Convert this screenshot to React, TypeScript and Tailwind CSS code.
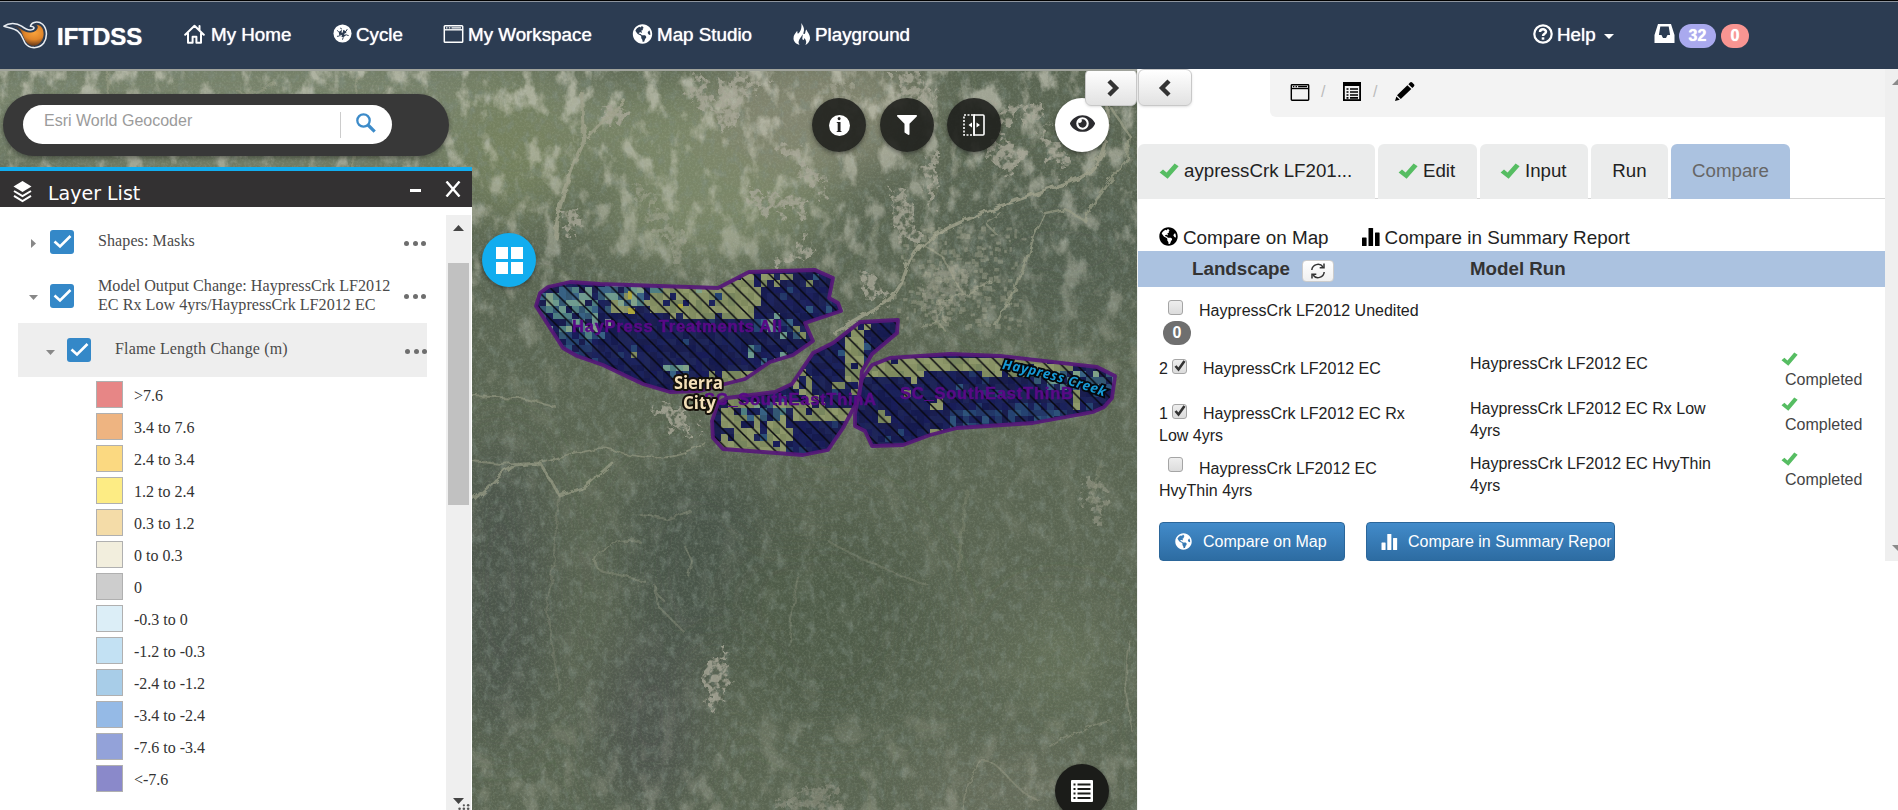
import React from "react";
import { FaGlobeAmericas, FaFilter, FaEye } from "react-icons/fa";

type P = { className?: string };

const Home = ({ className }: P) => (
  <svg viewBox="0 0 21 20" className={className} fill="none" stroke="currentColor" strokeWidth="2" strokeLinejoin="round" strokeLinecap="round">
    <path d="M1.2 10.8 10.5 1.8l9.3 9M4 9.5v9.2h4.6v-6h3.8v6H17V9.5M15.5 6V2" />
  </svg>
);
const Cycle = ({ className }: P) => (
  <svg viewBox="0 0 20 20" className={className}>
    <circle cx="10" cy="10" r="9.5" fill="white" />
    <path d="M10 5.800 13.800 7.600 14.200 11.600 10.800 14 6.800 12.600 6 8.400z" fill="#2c3c52" />
    <path d="M10 5.800 7.500 4.200M13.800 7.600 15 5.400M14.200 11.600 16.500 12.200M10.800 14 10 16.500M6.800 12.600 4.200 13M6 8.400 4.500 6.600" stroke="#2c3c52" strokeWidth="1" />
    <path d="M10.500 4.500 9.500 9M14.500 9.500 12 11M8 13.500 8.800 11.500" stroke="white" strokeWidth="1.300" />
  </svg>
);
const WindowIcon = ({ className }: P) => (
  <svg viewBox="0 0 20 18" className={className} fill="none" stroke="currentColor">
    <rect x=".8" y=".8" width="18.4" height="16.4" rx=".8" strokeWidth="1.5" />
    <path d="M1 4.8h18" strokeWidth="1.4" />
    <path d="M2.5 2.8h1.5M5.3 2.8h1.5M8 2.8h9.5" strokeWidth="1.2" />
  </svg>
);
const Fire = ({ className }: P) => (
  <svg viewBox="0 0 18 22" className={className} fill="currentColor">
    <path d="M8.2 0c1.6 2.4 3 4.6 2.8 7.2-.1 1.4-.8 2.6-.5 3.8.9.3 1.6-.6 1.8-1.6.2-1 .1-2 1.2-2.9.3 2.2 3.9 5 3.5 9.2-.3 3-2.3 5.2-4.6 6.2 1.6-2.6.8-5.2-1.2-7 .1 1.9-1 2.5-1.6 1.6-.9-1.4.6-3.4-.2-5.3-.4 2.4-3.6 4.6-3.8 7.5-.1 1.2.3 2.4 1 3.2C3.400 21 .6 18.700.5 15.400.4 12 2.600 10.200 4.200 7.800c.3 1 0 2.200.7 2.900 2.700-1.600 4.300-6.200 3.300-10.700z" />
  </svg>
);
const Help = ({ className }: P) => (
  <svg viewBox="0 0 20 20" className={className} fill="none" stroke="currentColor">
    <circle cx="10" cy="10" r="8.7" strokeWidth="2.200" />
    <path d="M7 8c0-3.600 6-3.600 6-.2 0 2-3 2-3 4.200" strokeWidth="2.500" />
    <path d="M10 13.300v2.400" strokeWidth="2.600" />
  </svg>
);
const Inbox = ({ className }: P) => (
  <svg viewBox="0 0 20 19" className={className}>
    <path fillRule="evenodd" fill="currentColor" d="M3.500 0h13L20 11v8H0v-8zM5.800 2.600 4.400 11h2.600l1.500 3h3l1.500-3h2.600L14.200 2.600z" />
  </svg>
);
const ListIcon = ({ className }: P) => (
  <svg viewBox="0 0 18 19" className={className} fill="none" stroke="currentColor">
    <rect x=".9" y=".9" width="16.200" height="17.200" strokeWidth="1.800" />
    <path d="M0 2h18" strokeWidth="4" />
    <path d="M3.500 7h2M3.500 10h2M3.500 13h2M3.500 15.800h2M7 7h8M7 10h8M7 13h8M7 15.800h8" strokeWidth="1.700" />
  </svg>
);
const Pencil = ({ className }: P) => (
  <svg viewBox="0 0 20 19" className={className} fill="currentColor">
    <path d="M15 .6c.7-.7 1.500-.7 2.200 0l1.700 1.600c.7.7.7 1.500 0 2.200l-1.600 1.500-3.900-3.700zM12.400 3.200l3.900 3.700L5.800 17 2 13.200zM1.400 14.400 4.800 17.700 0 19z" />
  </svg>
);
const Bars = ({ className }: P) => (
  <svg viewBox="0 0 18 18" className={className} fill="currentColor">
    <rect x="0" y="9.500" width="4.600" height="8.500" rx=".6" />
    <rect x="6.500" y="0" width="4.600" height="18" rx=".6" />
    <rect x="13" y="4.500" width="4.600" height="13.500" rx=".6" />
  </svg>
);
const Refresh = ({ className }: P) => (
  <svg viewBox="0 0 16 16" className={className} fill="none" stroke="currentColor" strokeWidth="1.500">
    <path d="M1.800 7A6.200 6.200 0 0 1 13 4M14.200 9A6.200 6.200 0 0 1 3 12" />
    <path d="M14 .5v4.300H9.700M2 15.500v-4.300h4.300" />
  </svg>
);
const Logo = ({ className }: P) => (
  <svg viewBox="0 0 46 30" className={className}>
    <defs>
      <radialGradient id="flame" cx=".68" cy=".38" r=".6">
        <stop offset="0" stopColor="#f9a33c" />
        <stop offset=".55" stopColor="#e0852a" />
        <stop offset="1" stopColor="#6d3d1c" />
      </radialGradient>
    </defs>
    <path d="M1 6C6 2.200 14 2.500 19 6c4 3 8 5 11.500 3.200 2-1.200 1.500-3-2.500-3.200C29 1.500 36 .2 40.500 4c5 5 5 14 1 19.500-5 6-15 6-19-.5-3-5.500-3.500-9-7.500-12C11.500 8.300 7 8 1 6z" fill="#2c3c52" stroke="#e9edf2" strokeWidth="1.600" strokeLinejoin="round" />
    <path d="M11.500 5.500c4 .5 7 4 11 6 5 2.200 12 .5 13-4 .2-1.500-.5-2.500-1.500-3 5 0 7.500 4 7.500 9.500 0 6-4.500 12-10 12s-8.500-4-10.500-9c-2-5.500-4-9.500-9.500-11.500z" fill="url(#flame)" />
  </svg>
);

const palette = {
  navy: ["#11155a", "#141a5c", "#0e1250", "#171d58", "#12164f"],
  olive: ["#8c9666", "#848f60", "#949d6c", "#7a885e"],
  teal: ["#4b7f86", "#6f9f93", "#2e5577", "#84a88e", "#34618a"],
  blue: ["#1f3f74", "#27507e", "#1b3269"],
};
type Blob = [number, number, number, number, keyof typeof palette, number];
const rnd = (a: number, b: number) => {
  const s = Math.sin(a * 127.1 + b * 311.700) * 43758.5453;
  return s - Math.floor(s);
};

function Raster({ x0, y0, x1, y1, blobs, seed, id }: { x0: number; y0: number; x1: number; y1: number; blobs: Blob[]; seed: number; id: string }) {
  const c = 6.5;
  const cells: React.ReactNode[] = [];
  for (let y = y0, j = 0; y < y1; y += c, j++) {
    for (let x = x0, i = 0; x < x1; x += c, i++) {
      let kind: keyof typeof palette = rnd(i + seed, j * 3) > 0.955 ? "blue" : "navy";
      if (rnd(i * 2 + seed, j + 9) > 0.99) kind = "olive";
      blobs.forEach(([cx, cy, rx, ry, k, d], n) => {
        const q = ((x - cx) / rx) ** 2 + ((y - cy) / ry) ** 2;
        if (q < 0.75 + rnd(i, j + n * 17) * 0.5 && rnd(i + n * 31 + seed, j + 5) < d) kind = k;
      });
      const set = palette[kind];
      cells.push(<rect key={i + "_" + j} x={x} y={y} width={c + 0.2} height={c + 0.2} fill={set[Math.floor(rnd(i + 4, j + seed) * set.length)]} />);
    }
  }
  return <g clipPath={`url(#${id})`} shapeRendering="crispEdges">{cells}</g>;
}

const areaAll = "M536 305 540 292 548 286 570 281 600 283 718 287 749 271 815 269 833 277 829 297 838 302 841 310 805 322 813 340 793 354 770 361 745 378 725 383 700 390 670 391 643 383 603 364 577 355 563 347Z";
const areaA = "M712 420 718 402 727 397 775 391 792 383 813 352 833 342 860 321 898 319 897 332 872 353 862 370 859 397 843 427 828 449 803 454 723 448 713 437Z";
const areaB = "M855 413 862 378 872 364 890 357 950 353 1000 355 1097 366 1115 375 1112 397 1104 406 1093 411 1033 422 957 427 930 434 903 444 872 445 865 430 855 425Z";

const blobsAll: Blob[] = [
  [560, 305, 26, 24, "teal", 0.7],
  [640, 285, 50, 16, "teal", 0.75],
  [700, 297, 55, 17, "olive", 0.9],
  [738, 290, 20, 26, "olive", 0.95],
  [590, 312, 16, 26, "teal", 0.6],
  [620, 298, 14, 12, "olive", 0.6],
  [570, 340, 26, 14, "blue", 0.7],
  [780, 275, 36, 6, "olive", 0.6],
  [785, 322, 40, 12, "teal", 0.35],
  [775, 350, 40, 8, "teal", 0.3],
  [745, 376, 45, 9, "olive", 0.8],
  [798, 328, 8, 8, "olive", 0.7],
  [672, 366, 12, 5, "teal", 0.7],
];
const blobsA: Blob[] = [
  [735, 420, 22, 30, "olive", 0.7],
  [745, 442, 40, 8, "olive", 0.85],
  [775, 428, 14, 18, "olive", 0.85],
  [825, 411, 40, 7, "olive", 0.85],
  [853, 352, 11, 36, "olive", 0.97],
  [800, 400, 40, 6, "olive", 0.7],
  [762, 406, 24, 12, "teal", 0.5],
  [836, 381, 6, 4, "olive", 1],
  [880, 325, 30, 5, "olive", 0.35],
  [802, 380, 10, 14, "olive", 0.5],
];
const blobsB: Blob[] = [
  [890, 360, 42, 12, "olive", 0.95],
  [960, 359, 60, 8, "olive", 0.97],
  [1020, 363, 50, 10, "olive", 0.75],
  [1060, 376, 40, 12, "teal", 0.45],
  [1093, 372, 26, 9, "teal", 0.7],
  [1072, 396, 5, 14, "olive", 0.9],
  [1010, 416, 70, 14, "blue", 0.75],
  [934, 402, 5, 12, "olive", 0.8],
  [880, 412, 5, 6, "olive", 0.9],
  [933, 426, 4, 4, "olive", 1],
];

function MapCanvas() {
  return (
    <svg viewBox="0 70 1137 740" className="block h-full w-full" preserveAspectRatio="xMinYMin slice">
      <defs>
        <filter id="blur"><feGaussianBlur stdDeviation="26" /></filter>
        <filter id="rough" x="-10%" y="-10%" width="120%" height="120%">
          <feTurbulence type="fractalNoise" baseFrequency=".09" numOctaves="3" seed="5" result="n" />
          <feDisplacementMap in="SourceGraphic" in2="n" scale="7" result="d" />
          <feGaussianBlur in="d" stdDeviation=".5" />
        </filter>
        <filter id="patchy" x="-10%" y="-10%" width="120%" height="120%">
          <feTurbulence type="fractalNoise" baseFrequency=".07" numOctaves="4" seed="15" result="n" />
          <feDisplacementMap in="SourceGraphic" in2="n" scale="34" xChannelSelector="R" yChannelSelector="G" result="d" />
          <feTurbulence type="fractalNoise" baseFrequency=".16" numOctaves="3" seed="2" />
          <feColorMatrix values="0 0 0 0 1  0 0 0 0 1  0 0 0 0 1  5 0 0 0 -1.800" result="m" />
          <feComposite in="d" in2="m" operator="in" />
          <feGaussianBlur stdDeviation=".7" />
        </filter>
        <filter id="fine" x="0" y="0" width="100%" height="100%">
          <feTurbulence type="fractalNoise" baseFrequency=".45" numOctaves="3" seed="8" />
          <feColorMatrix values="0 0 0 0 .6  0 0 0 0 .66  0 0 0 0 .5  2 0 0 0 -.85" />
        </filter>
        <filter id="dark" x="0" y="0" width="100%" height="100%">
          <feTurbulence type="fractalNoise" baseFrequency=".13 .09" numOctaves="4" seed="21" />
          <feColorMatrix values="0 0 0 0 .22  0 0 0 0 .28  0 0 0 0 .24  3 0 0 0 -1.45" />
        </filter>
        <filter id="tan" x="0" y="0" width="100%" height="100%">
          <feTurbulence type="fractalNoise" baseFrequency=".05 .035" numOctaves="5" seed="3" />
          <feColorMatrix values="0 0 0 0 .66  0 0 0 0 .65  0 0 0 0 .56  4.500 0 0 0 -2.300" />
        </filter>
        <linearGradient id="fade" x1="0" y1="0" x2="0" y2="1">
          <stop offset="0" stopColor="white" />
          <stop offset=".25" stopColor="#999" />
          <stop offset=".45" stopColor="#2c2c2c" />
          <stop offset=".8" stopColor="#141414" />
          <stop offset="1" stopColor="#666" />
        </linearGradient>
        <mask id="topMask"><rect y="70" width="1137" height="740" fill="url(#fade)" /></mask>
        <pattern id="hatch" width="15.5" height="15.5" patternUnits="userSpaceOnUse">
          <path d="M-1-1 16.5 16.5M-1 14.500 1 16.500M14.500-1 16.500 1" stroke="#08080f" strokeWidth="1.500" />
        </pattern>
        <clipPath id="cAll"><path d={areaAll} /></clipPath>
        <clipPath id="cA"><path d={areaA} /></clipPath>
        <clipPath id="cB"><path d={areaB} /></clipPath>
        <path id="creek" d="M1002 368 C1030 372 1062 381 1106 396" />
      </defs>
      <rect y="70" width="1137" height="740" fill="#5a6552" />
      <g filter="url(#blur)">
        <ellipse cx="260" cy="110" rx="380" ry="70" fill="#78836c" />
        <ellipse cx="700" cy="170" rx="140" ry="90" fill="#7a8667" />
        <ellipse cx="510" cy="150" rx="60" ry="70" fill="#74815f" />
        <ellipse cx="820" cy="110" rx="110" ry="60" fill="#82856f" />
        <ellipse cx="1060" cy="250" rx="110" ry="70" fill="#535e4f" />
        <ellipse cx="500" cy="590" rx="50" ry="150" fill="#4b544c" />
        <ellipse cx="700" cy="560" rx="80" ry="100" fill="#4a544a" />
        <ellipse cx="650" cy="720" rx="50" ry="90" fill="#4e554d" />
        <ellipse cx="830" cy="620" rx="100" ry="110" fill="#4f5b4a" />
        <ellipse cx="1060" cy="660" rx="50" ry="50" fill="#647059" />
        <ellipse cx="1010" cy="790" rx="100" ry="40" fill="#666d5b" />
        <ellipse cx="600" cy="190" rx="26" ry="36" fill="#5d6953" />
      </g>
      <rect y="70" width="1137" height="740" filter="url(#dark)" opacity=".4" />
      <rect y="70" width="1137" height="740" filter="url(#tan)" opacity=".6" mask="url(#topMask)" />
      <g filter="url(#patchy)" fill="#a7a697" opacity=".8">
        <path d="M893 70 920 70 938 112 930 115 915 98 900 88Z" />
        <path d="M995 108 1010 102 1022 108 1040 105 1050 125 1068 160 1055 170 1045 140 1042 115 1010 115 1005 135 1018 145 1028 165 1008 172 985 160 990 148 1004 143 998 130Z" />
        <path d="M918 160 935 155 938 190 934 208 928 195 925 175Z" />
        <path d="M780 138 800 146 815 165 826 200 815 190 796 168Z" />
        <path d="M740 190 790 192 812 205 800 215 760 208Z" />
        <path d="M785 255 800 236 812 232 802 262 780 272Z" />
        <path d="M694 70 708 90 724 102 706 116 692 92Z" />
        <path d="M730 72 765 74 740 100 728 130 718 110Z" />
        <path d="M890 180 912 200 918 235 900 245 894 215Z" />
        <path d="M860 270 880 282 884 302 866 298Z" />
        <path d="M705 665 724 645 730 665 724 705 712 712 703 690Z" />
        <path d="M630 180 650 190 690 245 680 262 655 225Z" opacity=".6" />
        <path d="M1086 480 1104 474 1102 524 1088 512Z" opacity=".6" />
        <path d="M650 400 680 408 700 435 665 428Z" />
        <path d="M830 90 850 85 856 110 846 125 836 112Z" opacity=".7" />
        <path d="M560 210 580 205 582 228 560 230Z" />
        <path d="M600 112 618 106 634 112 615 122Z" />
        <path d="M925 270 960 262 968 300 930 320Z" opacity=".5" />
        <path d="M780 800 830 780 840 810 780 810Z" opacity=".5" />
      </g>
      <g filter="url(#rough)" fill="none" stroke="#9fa18b" strokeLinecap="round" opacity=".8">
        <path d="M624 100 606 118 588 136M582 92 584 140 574 162 564 190 558 212 556 236" strokeWidth="4" />
        <path d="M835 332C880 306 895 300 903 278 912 250 924 238 950 226 1000 203 1045 190 1080 177 1098 168 1108 150 1108 105" strokeWidth="3.500" />
        <path d="M1112 108 1130 135 1126 160 1105 185 1090 205 1085 220 1065 208 1045 212 1034 235 1025 262 1015 290 1002 312 995 325" strokeWidth="2.500" opacity=".8" />
        <path d="M925 245 942 255 955 280 965 294 990 280M965 294 940 300 938 320 945 330M1000 212 985 222 998 235M920 325 945 320 940 300" strokeWidth="1.800" opacity=".7" />
        <path d="M470 395 520 397 555 405M472 460 500 463 545 460C580 450 600 443 615 450 650 460 680 460 705 442" strokeWidth="1.800" opacity=".65" />
        <path d="M470 502 500 475 515 464 540 462 560 495 585 486 612 462" strokeWidth="3" opacity=".8" />
        <path d="M560 495C552 540 556 580 546 610 552 640 554 660 560 690" strokeWidth="2" opacity=".35" />
        <path d="M640 541C605 535 580 562 605 572L645 580M690 510 668 518 642 515M685 545 692 560 688 575M656 592 664 600M655 585 658 605 685 632" strokeWidth="2" opacity=".45" />
        <path d="M798 575C793 600 790 620 790 640M828 540 850 552 890 570 928 585" strokeWidth="2" opacity=".35" />
        <path d="M967 490 962 530 958 570M1102 460 1090 500" strokeWidth="3" opacity=".3" />
        <path d="M962 810C964 790 970 775 980 760 1000 755 1010 790 1040 800M1050 745 1090 725 1110 720M1130 640C1122 670 1125 690 1132 730" strokeWidth="1.800" opacity=".5" />
        <path d="M108 70 108 95M358 75 356 94M355 155 352 168M238 90C250 96 262 88 275 82M390 95 395 130" strokeWidth="2.500" opacity=".6" />
      </g>
      <g fill="#a9a993" opacity=".4">
        {Array.from({ length: 200 }, (_, i) => (
          <rect key={i} x={930 + rnd(i, 1) * 100 - rnd(i, 4) * 40} y={225 + rnd(i, 2) * 100} width={2 + rnd(i, 3) * 4} height={2 + rnd(i, 5) * 3} />
        ))}
      </g>
      <rect y="70" width="1137" height="740" filter="url(#fine)" opacity=".18" />
      <g opacity=".9">
        <Raster id="cAll" x0={533} y0={266} x1={845} y1={395} blobs={blobsAll} seed={3} />
        <Raster id="cA" x0={708} y0={316} x1={902} y1={458} blobs={blobsA} seed={7} />
        <Raster id="cB" x0={852} y0={350} x1={1120} y1={448} blobs={blobsB} seed={11} />
        <path d="M628 307h7v6h-7zM628 290h4v8h-4zM678 303h5v4h-5z" fill="#b5ad3a" />
      </g>
      {[areaAll, areaA, areaB].map((d) => (
        <g key={d}>
          <path d={d} fill="url(#hatch)" />
          <path d={d} fill="none" stroke="#561878" strokeWidth="3.800" strokeLinejoin="round" opacity=".92" />
        </g>
      ))}
      <g fontFamily="Liberation Sans, sans-serif" fontWeight="bold" fontSize="16.500" fill="#580a86" stroke="#580a86" strokeWidth=".5">
        <text x="572" y="331" textLength="210">HayPress Treatments All</text>
        <text x="704" y="404" textLength="172">SC_SouthEastThinA</text>
        <text x="900" y="398" textLength="173">SC_SouthEastThinB</text>
      </g>
      <g fontFamily="Open Sans, sans-serif" fontWeight="bold" fontSize="17" fill="#f3dfb8" stroke="#15110a" strokeWidth="4" paintOrder="stroke" strokeLinejoin="round">
        <text x="674" y="388" textLength="49">Sierra</text>
        <text x="683" y="408" textLength="33">City</text>
      </g>
      <text fontFamily="Open Sans, sans-serif" fontWeight="bold" fontStyle="italic" fontSize="13.500" fill="#169ad6" stroke="#05080c" strokeWidth="3.500" paintOrder="stroke">
        <textPath href="#creek" textLength="106">Haypress Creek</textPath>
      </text>
    </svg>
  );
}

const legend: [string, string][] = [
  [">7.6", "bg-[#e78686]"],
  ["3.4 to 7.6", "bg-[#eeb481]"],
  ["2.4 to 3.4", "bg-[#fbd981]"],
  ["1.2 to 2.4", "bg-[#fdec84]"],
  ["0.3 to 1.2", "bg-[#f4dca8]"],
  ["0 to 0.3", "bg-[#f2eedd]"],
  ["0", "bg-[#cdcdcd]"],
  ["-0.3 to 0", "bg-[#dceef7]"],
  ["-1.2 to -0.3", "bg-[#c3e1f3]"],
  ["-2.4 to -1.2", "bg-[#a8cde8]"],
  ["-3.4 to -2.4", "bg-[#95bae6]"],
  ["-7.6 to -3.4", "bg-[#93a2d9]"],
  ["<-7.6", "bg-[#8a89ca]"],
];

const BlueCheck = () => (
  <div className="h-6 w-6 shrink-0 rounded-[3px] bg-[#3488c8]">
    <svg viewBox="0 0 24 24" className="h-6 w-6" fill="none" stroke="white" strokeWidth="2.600"><path d="M4.500 11.500 10 16.500 20.500 6" /></svg>
  </div>
);
const Dots = () => (
  <div className="mt-[2px] flex w-[22px] shrink-0 justify-between">
    <i className="h-[5px] w-[5px] rounded-full bg-[#6e6e6e]" />
    <i className="h-[5px] w-[5px] rounded-full bg-[#6e6e6e]" />
    <i className="h-[5px] w-[5px] rounded-full bg-[#6e6e6e]" />
  </div>
);
const Tri = ({ d, className }: { d: string; className: string }) => (
  <svg viewBox="0 0 10 10" preserveAspectRatio="none" className={className} fill="currentColor"><path d={d} /></svg>
);
const RIGHT = "M0 0 10 5 0 10z";
const DOWN = "M0 0H10L5 10z";
const UP = "M0 10H10L5 0z";

function LayerList() {
  return (
    <section className="flex h-[643px] w-[472px] flex-col border-t-4 border-[#12adef] bg-white">
      <header className="flex h-9 shrink-0 items-center bg-[#333132] pr-[11px] pl-[10px] text-white">
        <svg viewBox="0 0 19 22" className="mt-[5px] ml-[3px] h-[22px] w-[19px]" fill="none" stroke="white" strokeWidth="2">
          <path d="M9.500 0 18.500 5.500 9.500 11 .5 5.500z" fill="white" stroke="none" />
          <path d="M1 10 9.500 15.200 18 10M1 14.800 9.500 20 18 14.800" />
        </svg>
        <h2 className="ml-4 pt-[9px] font-['DejaVu_Sans'] text-[19px] leading-none">Layer List</h2>
        <i className="mt-[3px] mr-[24px] ml-auto h-[3px] w-[11px] bg-white" />
        <svg viewBox="0 0 16 16" className="mb-[1px] h-[16px] w-[16px]" fill="none" stroke="white" strokeWidth="2.400"><path d="M1.500 .5 14.500 15.500M14.500 .5 1.500 15.500" /></svg>
      </header>
      <div className="flex min-h-0 flex-1 overflow-hidden font-['Liberation_Serif'] text-[16px] text-[#4a4a4a]">
        <div className="w-[446px]">
          <div className="flex h-[59px] items-center pt-[11px] pr-5 pl-[31px]">
            <Tri d={RIGHT} className="mt-[3px] h-[9px] w-[5px] text-[#888]" />
            <div className="ml-[14px]"><BlueCheck /></div>
            <div className="mb-[2px] ml-6 flex-1 tracking-[.1px]">Shapes: Masks</div>
            <Dots />
          </div>
          <div className="mt-[2px] flex h-[55px] items-center pr-5 pl-[29px]">
            <Tri d={DOWN} className="mt-1 h-[5px] w-[9px] text-[#888]" />
            <div className="ml-3"><BlueCheck /></div>
            <div className="mb-[1px] ml-6 flex-1 text-[16.150px] leading-[19px] whitespace-nowrap">Model Output Change: HaypressCrk LF2012<br />EC Rx Low 4yrs/HaypressCrk LF2012 EC</div>
            <Dots />
          </div>
          <div className="ml-[18px] flex h-[54px] w-[409px] items-center bg-[#eeeeee] pl-7">
            <Tri d={DOWN} className="mt-1 h-[5px] w-[9px] text-[#888]" />
            <div className="ml-3"><BlueCheck /></div>
            <div className="mb-[2px] ml-6 flex-1 tracking-[.15px]">Flame Length Change (m)</div>
            <Dots />
          </div>
          <ul className="pt-1 pl-24">
            {legend.map(([label, color]) => (
              <li key={label} className="flex h-8 items-start">
                <span className={`h-[27px] w-[27px] border border-[#b0b0b0] ${color}`} />
                <span className="ml-[11px] pt-[3px] leading-6 text-[#333]">{label}</span>
              </li>
            ))}
          </ul>
        </div>
        <div className="mt-2 flex w-[25px] flex-col items-center bg-[#efefef] pt-[10px]">
          <Tri d={UP} className="h-[6px] w-[11px] text-[#444]" />
          <div className="mt-8 h-[242px] w-[21px] bg-[#c1c1c1]" />
          <div className="mt-auto flex flex-col items-center">
            <Tri d={DOWN} className="h-[6px] w-[11px] text-[#444]" />
            <svg viewBox="0 0 16 7" className="ml-2 h-[6px] w-4" fill="#555"><circle cx="14" cy="1.500" r="1.500" /><circle cx="9" cy="1.500" r="1.300" /><circle cx="14" cy="5.500" r="1.500" /><circle cx="9" cy="5.500" r="1.500" /><circle cx="4" cy="5.500" r="1.500" /></svg>
          </div>
        </div>
      </div>
    </section>
  );
}

const disc = "flex h-[54px] w-[54px] items-center justify-center rounded-full shadow-[0_2px_4px_rgba(0,0,0,.4)]";
const grayBtn = "flex h-[37px] items-center justify-center rounded-md border border-[#c8c8c8] bg-gradient-to-b from-white to-[#e2e2e2] text-[#333] shadow-sm";
const Chevron = ({ d }: { d: string }) => (
  <svg viewBox="0 0 14 18" className="h-[18px] w-[14px]" fill="none" stroke="currentColor" strokeWidth="4.400"><path d={d} /></svg>
);

const Ok = ({ className }: P) => (
  <svg viewBox="0 0 20 19" preserveAspectRatio="none" className={className} fill="#56bd62">
    <path d="M.6 11.200 4 7.800 7.600 11.400 15.600 .6 19.600 3.800 8.600 18.600z" />
  </svg>
);
const Box = ({ on }: { on?: boolean }) => (
  <span className="inline-flex h-[15px] w-[15px] shrink-0 items-center justify-center rounded-[3px] border border-[#a5a5a5] bg-gradient-to-b from-[#eee] to-[#dcdcdc]">
    {on && <svg viewBox="0 0 12 12" className="h-3 w-3" fill="none" stroke="#333" strokeWidth="2.600"><path d="M1.500 6 4.500 9.500 10.500 1" /></svg>}
  </span>
);
const Done = () => (
  <div className="ml-[-4px] w-24">
    <Ok className="mt-[-1px] block h-[14px] w-[17px]" />
    <div className="pt-[3px] pl-[4px] leading-[22px] text-[#444]">Completed</div>
  </div>
);

function Row({ n, on, first, rest, model, h }: { n?: string; on?: boolean; first: string; rest?: string; model: string[]; h: string }) {
  return (
    <div className={`flex ${h}`}>
      <div className="w-[311px] leading-[22px]">
        <div className="flex pt-[5px]">
          {n && <span className="w-[13px]">{n}</span>}
          <span className={n ? "mt-[-2px]" : "mt-[-2px] ml-[9px]"}><Box on={on} /></span>
          <span className="ml-4">{first}</span>
        </div>
        {rest}
      </div>
      <div className="w-[315px] leading-[22px]">
        {model.map((m) => <div key={m}>{m}</div>)}
      </div>
      <Done />
    </div>
  );
}

function Panel() {
  const tab = "flex h-[55px] items-center rounded-t-md pb-[1px]";
  const idle = "bg-[#ebecec]";
  return (
    <aside className="flex h-[741px] flex-1 items-start border-l border-[#f2f2f2] bg-white text-[#222]">
      <div className="w-[747px]">
        <div className="flex h-[75px] items-start justify-between">
          <button className={`${grayBtn} w-[54px]`}><Chevron d="M11 2 4 9l7 7" /></button>
          <div className="flex h-[48px] w-[615px] items-start rounded-bl-md bg-[#f3f3f3] pt-[13px] pl-5 text-black">
            <WindowIcon className="mt-[2px] h-[17px] w-5" />
            <span className="ml-[11px] w-[7px] text-[16px] leading-[20px] text-[#bbb]">/</span>
            <ListIcon className="ml-[15px] h-[19px] w-[18px]" />
            <span className="ml-3 w-[7px] text-[16px] leading-[20px] text-[#bbb]">/</span>
            <Pencil className="ml-[15px] h-[19px] w-[20px]" />
          </div>
        </div>
        <nav className="flex h-[55px] gap-[3px] border-b border-[#d5d5d5] text-[18.700px]">
          <div className={`${tab} ${idle} w-[237px] pl-[21px]`}><Ok className="mr-[5px] h-[16px] w-[20px]" />aypressCrk LF201...</div>
          <div className={`${tab} ${idle} w-[99px] pl-[20px]`}><Ok className="mr-[5px] h-[16px] w-[20px]" />Edit</div>
          <div className={`${tab} ${idle} w-[108px] pl-[20px]`}><Ok className="mr-[5px] h-[16px] w-[20px]" />Input</div>
          <div className={`${tab} ${idle} w-[77px] justify-center`}>Run</div>
          <div className={`${tab} w-[119px] justify-center bg-[#abc2e0] text-[#666]`}>Compare</div>
        </nav>
        <div className="flex h-[52px] items-center pt-[26px] pl-[21px] text-[18.850px]">
          <FaGlobeAmericas className="mb-[4px] mr-[5px] h-[19px] w-[19px] text-black" />Compare on Map
          <Bars className="mb-[3px] ml-[33px] mr-[5px] h-[18px] w-[18px] text-black" />Compare in Summary Report
        </div>
        <div className="flex h-9 items-center bg-[#abc2e0] pl-[54px] text-[18.750px] font-bold text-[#333]">
          <span>Landscape</span>
          <button className="mt-[4px] ml-[12px] flex h-[22px] w-[32px] items-center justify-center rounded border border-[#ccc] bg-gradient-to-b from-white to-[#f0f0f0]"><Refresh className="h-[16px] w-[16px]" /></button>
          <span className="ml-[136px]">Model Run</span>
        </div>
        <div className="pl-[21px] text-[16px]">
          <div className="h-[66px] pt-[13px]">
            <div className="flex leading-[22px]"><span className="mt-[-1px] ml-[9px]"><Box /></span><span className="ml-4">HaypressCrk LF2012 Unedited</span></div>
            <span className="ml-1 mt-[-1px] flex h-6 w-7 items-center justify-center rounded-full bg-[#6f6f6f] font-bold text-white">0</span>
          </div>
          <Row n="2" on h="h-[45px]" first="HaypressCrk LF2012 EC" model={["HaypressCrk LF2012 EC"]} />
          <Row n="1" on h="h-[55px]" first="HaypressCrk LF2012 EC Rx" rest="Low 4yrs" model={["HaypressCrk LF2012 EC Rx Low", "4yrs"]} />
          <Row h="h-[69px]" first="HaypressCrk LF2012 EC" rest="HvyThin 4yrs" model={["HaypressCrk LF2012 EC HvyThin", "4yrs"]} />
          <div className="flex gap-[21px] text-white [text-shadow:0_0_1px_#fff]">
            <button className="flex h-[39px] w-[186px] items-center rounded border border-[#2b669a] bg-gradient-to-b from-[#428bca] to-[#2d6ca2] pl-[15px]"><FaGlobeAmericas className="mr-[11px] h-[17px] w-[17px]" />Compare on Map</button>
            <button className="flex h-[39px] w-[249px] items-center overflow-hidden rounded border border-[#2b669a] bg-gradient-to-b from-[#428bca] to-[#2d6ca2] pl-[14px] whitespace-nowrap"><Bars className="mr-[10px] h-[16px] w-[17px] shrink-0" />Compare in Summary Repor</button>
          </div>
        </div>
      </div>
      <div className="flex h-[492px] w-[13px] flex-col items-end justify-between overflow-hidden bg-[#efefef] pt-[10px] pb-[10px]">
        <svg viewBox="0 0 6 6" className="h-[6px] w-[6px]" fill="#8a8a8a"><path d="M6 0v6H0z" /></svg>
        <svg viewBox="0 0 6 6" className="h-[6px] w-[6px]" fill="#8a8a8a"><path d="M0 0h6v6z" /></svg>
      </div>
    </aside>
  );
}

export default function App() {
  return (
    <div className="h-[810px] w-[1898px] overflow-hidden bg-white font-['Liberation_Sans',sans-serif]">
      <header className="flex h-[69px] items-start border-t border-black bg-[#2c3c52] text-[18.800px] leading-[22px] text-white">
        <div className="flex h-full w-full items-start border-t border-[#8d949e] pt-[15px] [text-shadow:0_0_1px_#fff]">
          <Logo className="mt-[3px] ml-[3px] h-[30px] w-[45px]" />
          <b className="mt-[8px] ml-[9px] w-[86px] text-[24px] leading-[24px]">IFTDSS</b>
          <div className="ml-[41px] flex w-[149px] pt-[7px]"><Home className="mr-[6px] h-[20px] w-[21px]" />My Home</div>
          <div className="flex w-[110px] pt-[7px]"><Cycle className="mr-[4px] h-[19px] w-[19px]" />Cycle</div>
          <div className="flex w-[189px] whitespace-nowrap pt-[7px]"><WindowIcon className="mt-[1px] mr-[4px] h-[18px] w-[21px]" />My Workspace</div>
          <div className="flex w-[161px] pt-[7px]"><FaGlobeAmericas className="mr-[4px] h-[20px] w-[21px]" />Map Studio</div>
          <div className="flex w-[740px] pt-[7px]"><Fire className="mt-[-1px] mr-[4px] h-[22px] w-[18px]" />Playground</div>
          <div className="flex w-[121px] pt-[7px]"><Help className="mr-[4px] h-[20px] w-[20px]" />Help<Tri d={DOWN} className="mt-[10px] ml-[8px] h-[5px] w-[10px]" /></div>
          <Inbox className="mt-[7px] h-[19px] w-[21px]" />
          <span className="mt-[7px] ml-[4px] flex h-6 w-[37px] items-center justify-center rounded-full bg-[#a9a9ee] text-[16px] font-bold">32</span>
          <span className="mt-[7px] ml-[5px] flex h-6 w-[28px] items-center justify-center rounded-full bg-[#f99592] text-[16px] font-bold">0</span>
        </div>
      </header>
      <div className="flex">
        <main className="relative h-[741px] w-[1137px] overflow-hidden border-t-2 border-[#a0a39c]">
          <MapCanvas />
          <div className="absolute top-[23px] left-[3px] flex h-[62px] w-[446px] items-center rounded-full bg-[#383838] pl-5 shadow-[0_2px_5px_rgba(0,0,0,.4)]">
            <div className="mb-[1px] flex h-[39px] w-[369px] items-center rounded-full bg-white pl-[21px] text-[16px] text-[#9b9b9b]">
              <span className="w-[296px] pb-[8px]">Esri World Geocoder</span>
              <i className="h-[26px] w-px bg-[#ccc]" />
              <svg viewBox="0 0 20 20" className="mb-[3px] ml-[15px] h-[20px] w-[20px]" fill="none" stroke="#3c8bc9"><circle cx="7.500" cy="7.500" r="6.200" strokeWidth="2.300" /><path d="M12 12 18.700 18.700" strokeWidth="3.200" /></svg>
            </div>
          </div>
          <div className="absolute top-[96px] left-0"><LayerList /></div>
          <div className={`${disc} absolute top-[162px] left-[482px] bg-[#12adef]`}>
            <svg viewBox="0 0 27 27" className="h-[27px] w-[27px]" fill="white"><path d="M0 0h12v12H0zM15 0h12v12H15zM0 15h12v12H0zM15 15h12v12H15z" /></svg>
          </div>
          <div className="absolute top-[27px] left-[812px] flex">
            <div className={`${disc} bg-[#1f201d]/90`}>
              <div className="flex h-[21px] w-[21px] items-center justify-center rounded-full bg-white font-['Liberation_Serif'] text-[20px] leading-none font-bold text-[#222]">i</div>
            </div>
            <div className={`${disc} ml-[14px] bg-[#1f201d]/90 text-white`}><FaFilter className="h-[20px] w-[20px]" /></div>
            <div className={`${disc} ml-[13px] bg-[#1f201d]/90`}>
              <svg viewBox="0 0 22 22" className="h-[22px] w-[22px]" fill="none" stroke="white" strokeWidth="1.600">
                <path d="M10 1H1v20h9" strokeDasharray="2 1.500" /><path d="M11 0v22" /><rect x="11" y="1" width="10" height="20" rx="1" />
                <path d="M9 8.500v5L5.500 11zM13.500 8.500v5L17 11z" fill="white" stroke="none" />
              </svg>
            </div>
            <div className={`${disc} ml-[54px] bg-white text-[#2b2b2f]`}><FaEye className="mb-1 h-[25px] w-[25px]" /></div>
          </div>
          <div className={`${disc} absolute top-[693px] left-[1055px] bg-[#1b1c19]`}>
            <svg viewBox="0 0 22 22" className="h-[22px] w-[22px]"><rect width="22" height="22" rx="1" fill="white" /><path d="M2.500 4.500h2M2.500 9h2M2.500 13.500h2M2.500 18h2M6.500 4.500h13M6.500 9h13M6.500 13.500h13M6.500 18h13" stroke="#1b1c19" strokeWidth="2" /></svg>
          </div>
          <button className={`${grayBtn} absolute top-[-2px] right-0 w-[52px] pl-[3px]`}><Chevron d="M3 2l7 7-7 7" /></button>
        </main>
        <Panel />
      </div>
    </div>
  );
}
